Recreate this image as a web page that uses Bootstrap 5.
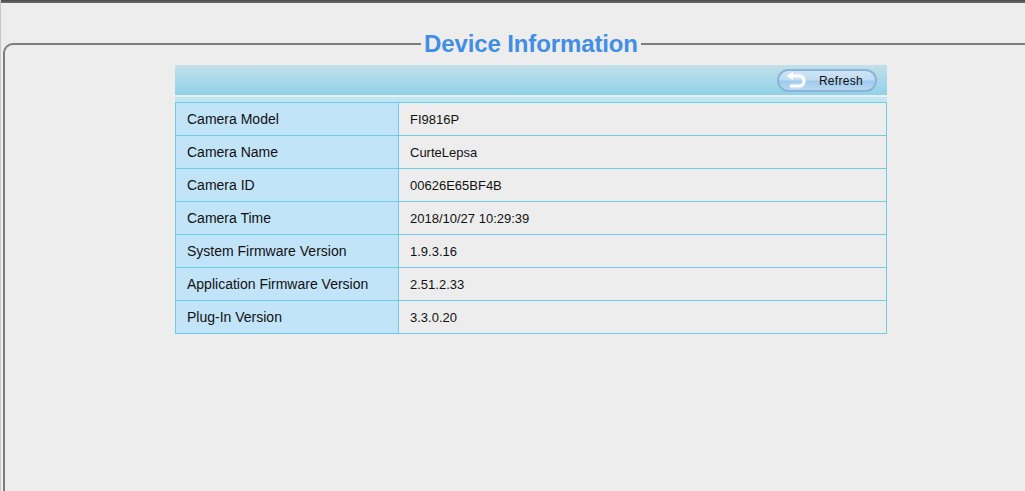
<!DOCTYPE html>
<html lang="en">
<head>
<meta charset="utf-8">
<title>Device Information</title>
<link href="https://cdn.jsdelivr.net/npm/bootstrap@5.3.0/dist/css/bootstrap.min.css" rel="stylesheet">
<style>
html,body{height:100%;}
body{background:#ededed;font-family:"Liberation Sans",Arial,sans-serif;color:#000;overflow:hidden;border-left:1px solid #c6c8cc;}
.top-rule{height:3px;background:linear-gradient(#4a4a4a,#6e6e6e);}
.outer-frame{margin:40px -40px 0 2px;height:calc(100vh - 43px);border:2px solid #7c7c7c;border-right:0;border-bottom:0;border-top-left-radius:10px;position:relative;padding-top:20px;}
.frame-title{position:absolute;top:-15px;left:416px;padding:0 3px;background:#ededed;font-size:24px;font-weight:700;line-height:28px;color:#418ee6;letter-spacing:-.12px;}
.info-wrap{width:712px;margin-left:170px;}
.tool-strip{height:30px;background:linear-gradient(#c2e0e9,#8fd2e9);padding:4px 10px 0 0;}
.refresh-pill{width:100px;height:23px;border:2px solid #8db4d6;border-radius:12px;background:linear-gradient(#cfe4f6 0,#bfdcf3 48%,#9fcaec 52%,#b6d9f1 100%);padding:1px 12px 0 0;font-size:12px;line-height:20px;letter-spacing:.3px;color:#111;}
.strip-gap{height:2px;}
.strip-band{height:5px;background:#bfe7f3;}
.info-table{width:712px;border-collapse:collapse;color:#111;}
.info-table td{height:33px;border:1px solid #6fcbee;padding:1px 0 0 11px;vertical-align:middle;font-size:13px;}
.info-table td:first-child{width:223px;background:#c1e4f9;font-size:14px;padding-top:0;}
</style>
</head>
<body>
<div class="top-rule"></div>
<div class="outer-frame">
  <div class="frame-title">Device Information</div>
  <div class="info-wrap">
    <div class="tool-strip d-flex justify-content-end">
      <button type="button" class="refresh-pill d-flex align-items-center justify-content-between">
        <svg width="26" height="20" viewBox="0 0 26 20" class="ms-1"><path d="M6 5h10a5 5 0 0 1 0 10H7" fill="none" stroke="#fff" stroke-opacity=".35" stroke-width="5"/><path d="M6 5h10a5 5 0 0 1 0 10H7" fill="none" stroke="#fff" stroke-width="2.6"/><path d="M10 1v8L3.5 5z" fill="#fff"/></svg>
        <span>Refresh</span>
      </button>
    </div>
    <div class="strip-gap"></div>
    <div class="strip-band"></div>
    <table class="info-table">
      <tr><td>Camera Model</td><td>FI9816P</td></tr>
      <tr><td>Camera Name</td><td>CurteLepsa</td></tr>
      <tr><td>Camera ID</td><td>00626E65BF4B</td></tr>
      <tr><td>Camera Time</td><td>2018/10/27 10:29:39</td></tr>
      <tr><td>System Firmware Version</td><td>1.9.3.16</td></tr>
      <tr><td>Application Firmware Version</td><td>2.51.2.33</td></tr>
      <tr><td>Plug-In Version</td><td>3.3.0.20</td></tr>
    </table>
  </div>
</div>
<script src="https://cdn.jsdelivr.net/npm/bootstrap@5.3.0/dist/js/bootstrap.bundle.min.js"></script>
</body>
</html>
